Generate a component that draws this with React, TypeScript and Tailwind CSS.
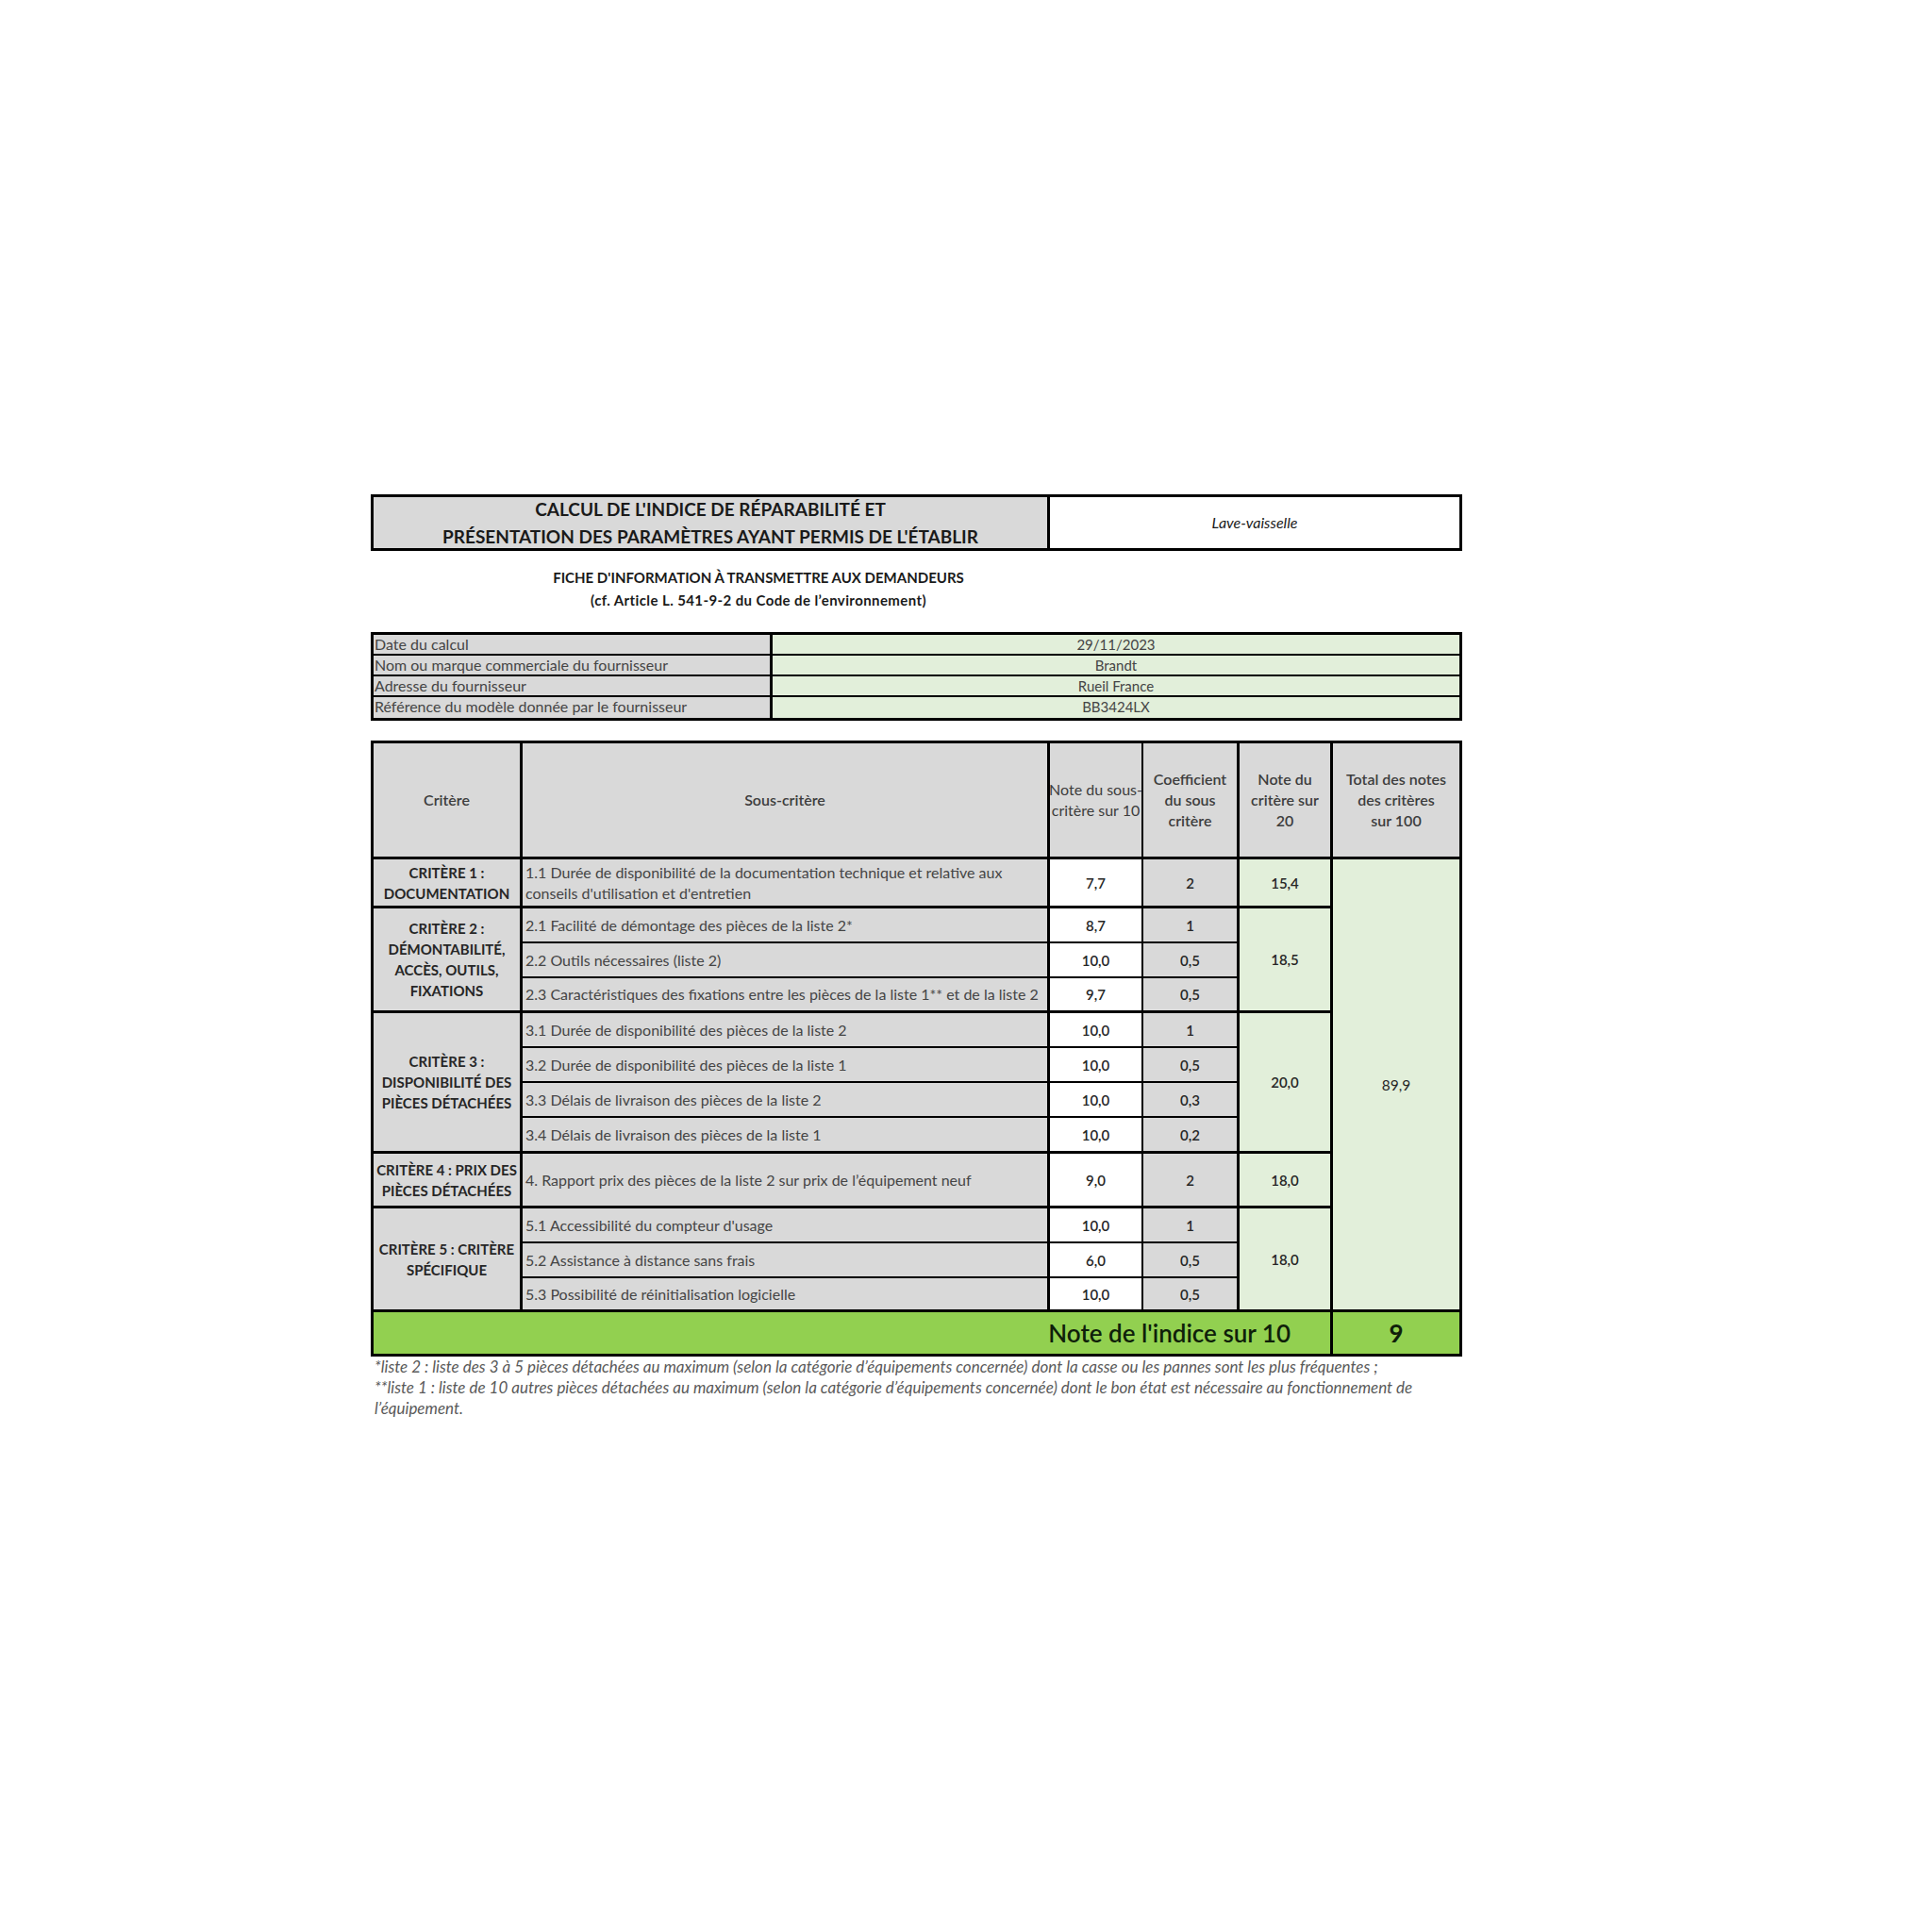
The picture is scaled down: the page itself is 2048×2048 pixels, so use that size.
import React from 'react';

type Sub = { text: React.ReactNode; note: string; coef: string; last?: boolean };
type Group = { label: React.ReactNode; total: string; subs: Sub[]; span: string; totalSpan: string };

const groups: Group[] = [
  {
    label: (<>CRITÈRE 1 :<br />DOCUMENTATION</>),
    total: '15,4',
    span: 'row-span-1',
    totalSpan: 'row-span-1',
    subs: [
      {
        text: (<>1.1 Durée de disponibilité de la documentation technique et relative aux<br />conseils d'utilisation et d'entretien</>),
        note: '7,7',
        coef: '2',
        last: true,
      },
    ],
  },
  {
    label: (<>CRITÈRE 2 :<br />DÉMONTABILITÉ,<br />ACCÈS, OUTILS,<br />FIXATIONS</>),
    total: '18,5',
    span: 'row-span-3',
    totalSpan: 'row-span-3',
    subs: [
      { text: '2.1 Facilité de démontage des pièces de la liste 2*', note: '8,7', coef: '1' },
      { text: '2.2 Outils nécessaires (liste 2)', note: '10,0', coef: '0,5' },
      { text: '2.3 Caractéristiques des fixations entre les pièces de la liste 1** et de la liste 2', note: '9,7', coef: '0,5', last: true },
    ],
  },
  {
    label: (<>CRITÈRE 3 :<br />DISPONIBILITÉ DES<br />PIÈCES DÉTACHÉES</>),
    total: '20,0',
    span: 'row-span-4',
    totalSpan: 'row-span-4',
    subs: [
      { text: '3.1 Durée de disponibilité des pièces de la liste 2', note: '10,0', coef: '1' },
      { text: '3.2 Durée de disponibilité des pièces de la liste 1', note: '10,0', coef: '0,5' },
      { text: '3.3 Délais de livraison des pièces de la liste 2', note: '10,0', coef: '0,3' },
      { text: '3.4 Délais de livraison des pièces de la liste 1', note: '10,0', coef: '0,2', last: true },
    ],
  },
  {
    label: (<>CRITÈRE 4 : PRIX DES<br />PIÈCES DÉTACHÉES</>),
    total: '18,0',
    span: 'row-span-1',
    totalSpan: 'row-span-1',
    subs: [
      { text: '4. Rapport prix des pièces de la liste 2 sur prix de l’équipement neuf', note: '9,0', coef: '2', last: true },
    ],
  },
  {
    label: (<>CRITÈRE 5 : CRITÈRE<br />SPÉCIFIQUE</>),
    total: '18,0',
    span: 'row-span-3',
    totalSpan: 'row-span-3',
    subs: [
      { text: "5.1 Accessibilité du compteur d'usage", note: '10,0', coef: '1' },
      { text: '5.2 Assistance à distance sans frais', note: '6,0', coef: '0,5' },
      { text: '5.3 Possibilité de réinitialisation logicielle', note: '10,0', coef: '0,5', last: true },
    ],
  },
];

const infos = [
  ['Date du calcul', '29/11/2023'],
  ['Nom ou marque commerciale du fournisseur', 'Brandt'],
  ['Adresse du fournisseur', 'Rueil France'],
  ['Référence du modèle donnée par le fournisseur', 'BB3424LX'],
];

export default function App() {
  return (
    <div className="w-[2048px] h-[2048px] bg-white font-['Lato',sans-serif] text-[#3d3d3d]">
      <div className="pt-[524px] pl-[393px] w-[1550px]">
        {/* en-tête */}
        <div className="flex h-[60px] w-[1157px] border-[3px] border-black">
          <div className="w-[717px] bg-[#d9d9d9] border-r-[3px] border-black flex flex-col items-center justify-center text-[19px] leading-[29px] font-bold text-[#1a1a1a]">
            <div>CALCUL DE L'INDICE DE RÉPARABILITÉ ET</div>
            <div>PRÉSENTATION DES PARAMÈTRES AYANT PERMIS DE L'ÉTABLIR</div>
          </div>
          <div className="flex-1 bg-white flex items-center justify-center italic text-[16px] text-[#1a1a1a]">
            Lave-vaisselle
          </div>
        </div>

        <div className="w-[822px] mt-[16px] text-center font-bold text-[15px] leading-[24px] text-[#1a1a1a]">
          <div>FICHE D'INFORMATION À TRANSMETTRE AUX DEMANDEURS</div>
          <div className="tracking-[0.4px]">(cf. Article L. 541-9-2 du Code de l’environnement)</div>
        </div>

        {/* infos fournisseur */}
        <div className="mt-[22px] w-[1157px] border-[3px] border-black">
          {infos.map(([label, value], i) => (
            <div key={label} className={`flex h-[22px] ${i < 3 ? 'border-b-2 border-black' : ''}`}>
              <div className="w-[423px] bg-[#d9d9d9] border-r-[3px] border-black pl-[1px] text-[16px] leading-[20px] text-[#454545]">
                {label}
              </div>
              <div className="flex-1 bg-[#e2efda] text-center text-[15px] leading-[20px] text-[#454545]">{value}</div>
            </div>
          ))}
        </div>

        {/* grille des critères */}
        <div className="mt-[21px] w-[1157px] grid grid-cols-[158px_559px_99px_102px_99px_137px] grid-rows-[123px_52px_37px_37px_37px_37px_37px_37px_38px_58px_37px_37px_36px_47px] border-t-[3px] border-l-[3px] border-black text-[16px] leading-[22px]">
          <div className="bg-[#d9d9d9] border-r-[3px] border-b-[3px] border-black flex items-center justify-center font-semibold">Critère</div>
          <div className="bg-[#d9d9d9] border-r-[3px] border-b-[3px] border-black flex items-center justify-center font-semibold">Sous-critère</div>
          <div className="bg-[#d9d9d9] border-r-2 border-b-[3px] border-black flex items-center justify-center text-center whitespace-nowrap">
            <div>Note du sous-<br />critère sur 10</div>
          </div>
          <div className="bg-[#d9d9d9] border-r-[3px] border-b-[3px] border-black flex items-center justify-center text-center font-semibold">
            <div>Coefficient<br />du sous<br />critère</div>
          </div>
          <div className="bg-[#d9d9d9] border-r-[3px] border-b-[3px] border-black flex items-center justify-center text-center font-semibold">
            <div>Note du<br />critère sur<br />20</div>
          </div>
          <div className="bg-[#d9d9d9] border-r-[3px] border-b-[3px] border-black flex items-center justify-center text-center font-semibold whitespace-nowrap">
            <div>Total des notes<br />des critères<br />sur 100</div>
          </div>

          {groups.map((g, gi) => (
            <React.Fragment key={gi}>
              {g.subs.map((s, si) => {
                const bottom = s.last ? 'border-b-[3px]' : 'border-b-2';
                return (
                  <React.Fragment key={si}>
                    {si === 0 && (
                      <div className={`${g.span} bg-[#d9d9d9] border-r-[3px] border-b-[3px] border-black flex items-center justify-center text-center font-bold text-[#262626] text-[15px] whitespace-nowrap`}>
                        <div>{g.label}</div>
                      </div>
                    )}
                    <div className={`bg-[#d9d9d9] border-r-[3px] ${bottom} border-black flex items-center pl-[3px] whitespace-nowrap text-[#454545]`}>
                      <div>{s.text}</div>
                    </div>
                    <div className={`bg-white border-r-2 ${bottom} border-black flex items-center justify-center font-semibold text-[15px] text-[#262626]`}>
                      {s.note}
                    </div>
                    <div className={`bg-[#d9d9d9] border-r-[3px] ${bottom} border-black flex items-center justify-center font-semibold text-[15px] text-[#262626]`}>
                      {s.coef}
                    </div>
                    {si === 0 && (
                      <div className={`${g.totalSpan} bg-[#e2efda] border-r-[3px] border-b-[3px] border-black flex items-center justify-center font-semibold text-[15px] text-[#262626]`}>
                        {g.total}
                      </div>
                    )}
                    {gi === 0 && si === 0 && (
                      <div className="row-span-12 bg-[#e2efda] border-r-[3px] border-b-[3px] border-black flex items-center justify-center text-[15.5px] text-[#262626]">
                        89,9
                      </div>
                    )}
                  </React.Fragment>
                );
              })}
            </React.Fragment>
          ))}

          <div className="col-span-5 bg-[#92d050] border-r-[3px] border-b-[3px] border-black flex items-center justify-end pr-[42px] text-[26px] font-semibold text-[#0f1f0a]">
            Note de l'indice sur 10
          </div>
          <div className="bg-[#92d050] border-r-[3px] border-b-[3px] border-black flex items-center justify-center text-[26px] font-bold text-[#0f1f0a]">
            9
          </div>
        </div>

        <div className="pl-[4px] italic text-[17px] leading-[22px] text-[#5a5a5a] whitespace-nowrap">
          <div>*liste 2 : liste des 3 à 5 pièces détachées au maximum (selon la catégorie d’équipements concernée) dont la casse ou les pannes sont les plus fréquentes ;</div>
          <div>**liste 1 : liste de 10 autres pièces détachées au maximum (selon la catégorie d’équipements concernée) dont le bon état est nécessaire au fonctionnement de</div>
          <div>l’équipement.</div>
        </div>
      </div>
    </div>
  );
}
